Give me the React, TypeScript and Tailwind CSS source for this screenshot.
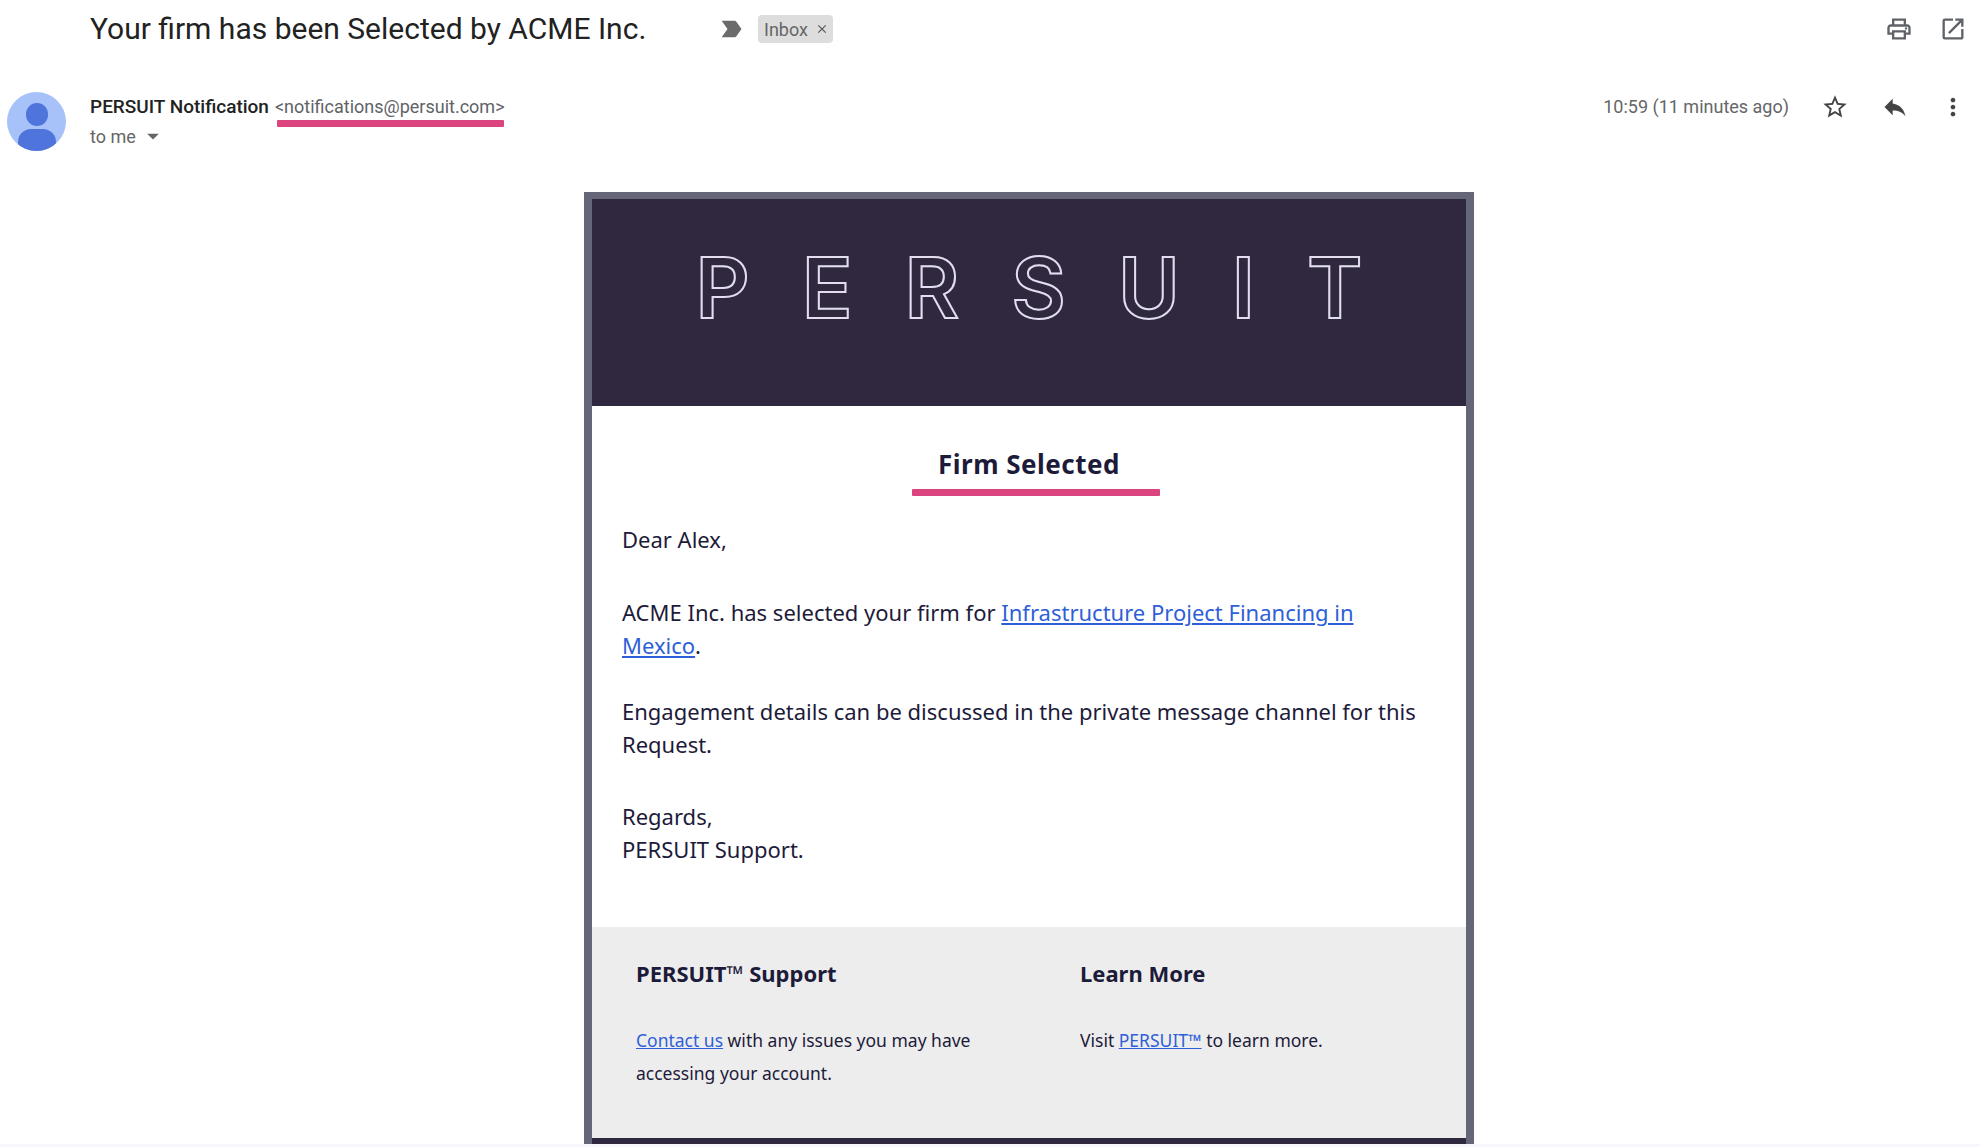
import React from 'react';
import {
  MdOutlineLabelImportant,
  MdOutlinePrint,
  MdOpenInNew,
  MdStarBorder,
  MdReply,
  MdMoreVert,
  MdClose,
  MdArrowDropDown
} from 'react-icons/md';

const bodyFont = "font-['Noto_Sans',sans-serif]";

function Avatar() {
  return (
    <div className="relative w-[59px] h-[59px] rounded-full overflow-hidden bg-[#a6c2f8] shrink-0">
      <div className="absolute left-[19px] top-[11px] w-[22px] h-[23px] rounded-full bg-[#4f74db]" />
      <div className="absolute left-[11px] top-[37px] w-[38px] h-[26px] rounded-full bg-[#4f74db]" />
    </div>
  );
}

function MailHeader() {
  return (
    <div className="font-['Roboto',sans-serif]">
      {/* subject row */}
      <div className="h-[58px] flex items-center justify-between pl-[90px] pr-[13px]">
        <div className="flex items-center">
          <h1 className="text-[30px] leading-[40px] text-[#222222] font-normal whitespace-nowrap w-[627px]">
            Your firm has been Selected by ACME Inc.
          </h1>
          <MdOutlineLabelImportant className="w-[28px] h-[28px] text-[#6b6b6b]" />
          <span className="ml-[13px] h-[28px] w-[75px] rounded-[4px] bg-[#dddddd] flex items-center pl-[6px] text-[18px] text-[#666666]">
            Inbox
            <MdClose className="ml-[7px] w-[14px] h-[14px] text-[#555555]" />
          </span>
        </div>
        <div className="flex items-center gap-[26px] text-[#5f6368]">
          <MdOutlinePrint className="w-[28px] h-[28px]" />
          <MdOpenInNew className="w-[28px] h-[28px]" />
        </div>
      </div>

      {/* sender row */}
      <div className="mt-[34px] h-[59px] flex justify-between pl-[7px] pr-[13px]">
        <div className="flex gap-[24px]">
          <Avatar />
          <div>
            <div className="flex items-baseline h-[30px] leading-[30px] whitespace-nowrap">
              <span className="text-[19px] font-medium text-[#222222]">PERSUIT Notification</span>
              <span className="relative ml-[6px] text-[18px] text-[#5f6368]">
                &lt;notifications@persuit.com&gt;
                <span className="absolute left-[2px] right-[1px] top-[28px] h-[7px] rounded-[1px] bg-[#dc4480]" />
              </span>
            </div>
            <div className="flex items-center h-[28px] text-[18px] text-[#666666]">
              to me
              <MdArrowDropDown className="ml-[3px] w-[28px] h-[28px] text-[#666666]" />
            </div>
          </div>
        </div>
        <div className="flex items-start gap-[32px] text-[#5f6368]">
          <span className="h-[30px] leading-[30px] text-[18px] text-[#666666] whitespace-nowrap">10:59 (11 minutes ago)</span>
          <MdStarBorder className="w-[28px] h-[28px] mt-[1px] text-[#444444]" />
          <MdReply className="w-[28px] h-[28px] mt-[1px] text-[#444444]" />
          <MdMoreVert className="w-[28px] h-[28px] mt-[1px] -ml-[2px] text-[#444444]" />
        </div>
      </div>
    </div>
  );
}

function EmailCard() {
  return (
    <div className={`ml-[584px] mt-[41px] w-[890px] h-[952px] border-x-[8px] border-t-[7px] border-[#656678] bg-white flex flex-col text-[#1d1b3a] ${bodyFont}`}>
      {/* logo band */}
      <div className="h-[207px] bg-[#2f283f] flex justify-center pt-[47px] pl-[52px]">
        <span className="font-['Inter',sans-serif] text-[84px] leading-[84px] font-semibold tracking-[52px] text-transparent [-webkit-text-stroke:2px_#e2deef] whitespace-nowrap">
          PERSUIT
        </span>
      </div>

      {/* message */}
      <div className="flex-1 flex flex-col">
        <h2 className="mt-[40px] text-center text-[26px] leading-[36px] font-bold tracking-[0.5px]">Firm Selected</h2>
        <div className="ml-[320px] mt-[7px] w-[248px] h-[7px] rounded-[1px] bg-[#dc4480]" />
        <div className="mt-[27px] px-[30px] text-[22px] leading-[33px]">
          <p>Dear Alex,</p>
          <p className="mt-[40px]">
            ACME Inc. has selected your firm for{' '}
            <a className="text-[#2f5fd8] underline">Infrastructure Project Financing in Mexico</a>.
          </p>
          <p className="mt-[33px]">
            Engagement details can be discussed in the private message channel for this Request.
          </p>
          <p className="mt-[39px]">
            Regards,
            <br />
            PERSUIT Support.
          </p>
        </div>
      </div>

      {/* footer */}
      <div className="h-[211px] bg-[#ededed] grid grid-cols-[444px_1fr] pl-[44px] pt-[30px]">
        <div>
          <h3 className="text-[22px] leading-[33px] font-bold">PERSUIT™ Support</h3>
          <p className="mt-[34px] text-[17.5px] leading-[33px]">
            <a className="text-[#2f5fd8] underline">Contact us</a> with any issues you may have
            <br />
            accessing your account.
          </p>
        </div>
        <div>
          <h3 className="text-[22px] leading-[33px] font-bold">Learn More</h3>
          <p className="mt-[34px] text-[17.5px] leading-[33px]">
            Visit <a className="text-[#2f5fd8] underline">PERSUIT™</a> to learn more.
          </p>
        </div>
      </div>
      <div className="h-[6px] bg-[#2f283f]" />
    </div>
  );
}

export default function App() {
  return (
    <div className="w-[1980px] h-[1148px] overflow-hidden bg-white flex flex-col">
      <MailHeader />
      <EmailCard />
      <div className="h-[3px] bg-[#f8f8fc]" />
    </div>
  );
}
